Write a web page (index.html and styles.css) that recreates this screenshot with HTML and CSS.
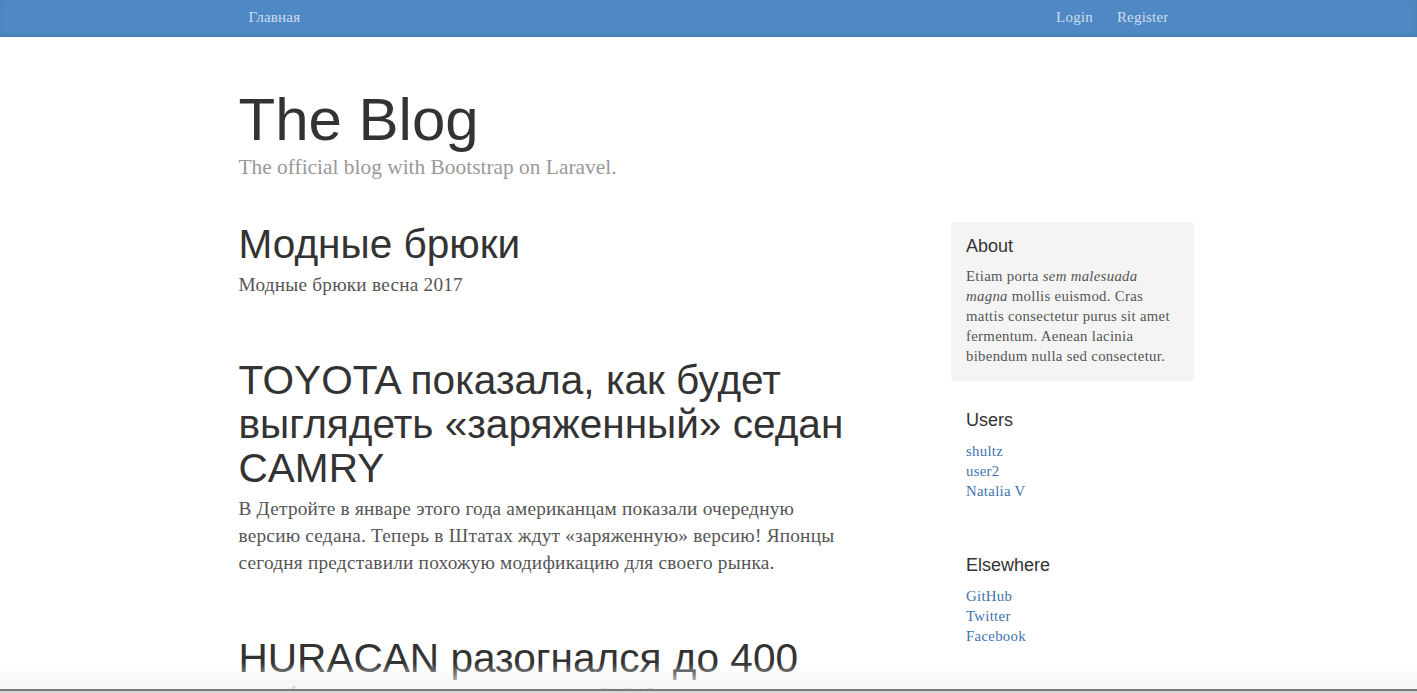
FILE: index.html
```html
<!DOCTYPE html>
<html lang="ru">
<head>
<meta charset="utf-8">
<title>The Blog</title>
<link rel="stylesheet" href="styles.css">
</head>
<body>
<div class="masthead">
  <nav class="container nav">
    <a class="nav-item" href="#">Главная</a>
    <div class="nav-right">
      <a class="nav-item" href="#">Login</a>
      <a class="nav-item" href="#">Register</a>
    </div>
  </nav>
</div>

<div class="container">
  <header class="blog-header">
    <h1 class="blog-title">The Blog</h1>
    <p class="blog-description">The official blog with Bootstrap on Laravel.</p>
  </header>

  <div class="row">
    <main class="blog-main">
      <article class="blog-post">
        <h2 class="blog-post-title">Модные брюки</h2>
        <p>Модные брюки весна 2017</p>
      </article>
      <article class="blog-post">
        <h2 class="blog-post-title">TOYOTA показала, как будет выглядеть «заряженный» седан CAMRY</h2>
        <p>В Детройте в январе этого года американцам показали очередную версию седана. Теперь в Штатах ждут «заряженную» версию! Японцы сегодня представили похожую модификацию для своего рынка.</p>
      </article>
      <article class="blog-post">
        <h2 class="blog-post-title">HURACAN разогнался до 400 км/ч на дистанции 300 м</h2>
        <p>Итальянский суперкар показал новый рекорд скорости.</p>
      </article>
    </main>

    <aside class="sidebar">
      <div class="sidebar-module inset">
        <h4>About</h4>
        <p>Etiam porta <em>sem malesuada magna</em> mollis euismod. Cras mattis consectetur purus sit amet fermentum. Aenean lacinia bibendum nulla sed consectetur.</p>
      </div>
      <div class="sidebar-module">
        <h4>Users</h4>
        <ol class="list">
          <li><a href="#">shultz</a></li>
          <li><a href="#">user2</a></li>
          <li><a href="#">Natalia V</a></li>
        </ol>
      </div>
      <div class="sidebar-module">
        <h4>Elsewhere</h4>
        <ol class="list">
          <li><a href="#">GitHub</a></li>
          <li><a href="#">Twitter</a></li>
          <li><a href="#">Facebook</a></li>
        </ol>
      </div>
    </aside>
  </div>
</div>

<div class="bottom-shade"></div>
</body>
</html>
```
FILE: styles.css
```css
* { box-sizing: border-box; }

html, body { margin: 0; padding: 0; }

body {
  font-family: "Liberation Serif", "Times New Roman", serif;
  font-size: 14.8px;
  letter-spacing: 0.3px;
  line-height: 20px;
  color: #555;
  background: #fff;
}

a { color: #3f73ad; text-decoration: none; }

.container {
  width: 940px;
  margin: 0 auto;
}

.masthead {
  background: #4f89c5;
  box-shadow: inset 0 -2px 5px rgba(0, 0, 0, 0.1);
}

.nav {
  display: flex;
  align-items: flex-start;
  height: 37px;
}

.nav-right {
  margin-left: auto;
  display: flex;
  gap: 4px;
}

.nav-item {
  display: block;
  padding: 7px 10px 10px;
  font-size: 15px;
  letter-spacing: 0.2px;
  line-height: 20px;
  color: #cdddeb;
}

.blog-header {
  padding: 20px 0;
}

.blog-title {
  margin: 30px 0 0;
  font-family: "Liberation Sans", Arial, sans-serif;
  font-weight: normal;
  font-size: 60px;
  letter-spacing: 0;
  line-height: 1.1;
  color: #333;
}

.blog-description {
  margin: 0 0 20px;
  font-size: 21.4px;
  letter-spacing: 0;
  line-height: 28.6px;
  color: #999;
}

.row {
  display: grid;
  grid-template-columns: 617px 212.5px;
  justify-content: space-between;
  align-items: start;
}

.blog-main {
  font-size: 19.3px;
  letter-spacing: 0.22px;
  line-height: 27px;
}

.blog-post {
  margin-bottom: 60px;
}

.blog-post-title {
  margin: 0 0 5px;
  font-family: "Liberation Sans", Arial, sans-serif;
  font-weight: normal;
  font-size: 40.6px;
  letter-spacing: 0;
  line-height: 44px;
  color: #333;
}

.blog-post p {
  margin: 0 0 10px;
}

.sidebar-module {
  padding: 15px;
  margin: 0 -15px 15px;
}

.sidebar-module.inset {
  background: #f4f4f4;
  border-radius: 4px;
}

.sidebar-module h4 {
  margin: 0 0 10px;
  font-family: "Liberation Sans", Arial, sans-serif;
  font-weight: normal;
  font-size: 18px;
  letter-spacing: 0;
  line-height: 1.1;
  color: #333;
}

.sidebar-module p {
  margin: 0;
}

.list {
  list-style: none;
  margin: 0 0 10px;
  padding: 0;
}

.bottom-shade {
  position: fixed;
  left: 0;
  right: 0;
  bottom: 0;
  height: 30px;
  pointer-events: none;
  background: linear-gradient(to bottom,
    rgba(255, 255, 255, 0) 0,
    rgba(244, 244, 244, 0.93) 26px,
    #7a7a7a 26px,
    #7a7a7a 28px,
    #d6d6d6 28px,
    #d6d6d6 30px);
}
```
